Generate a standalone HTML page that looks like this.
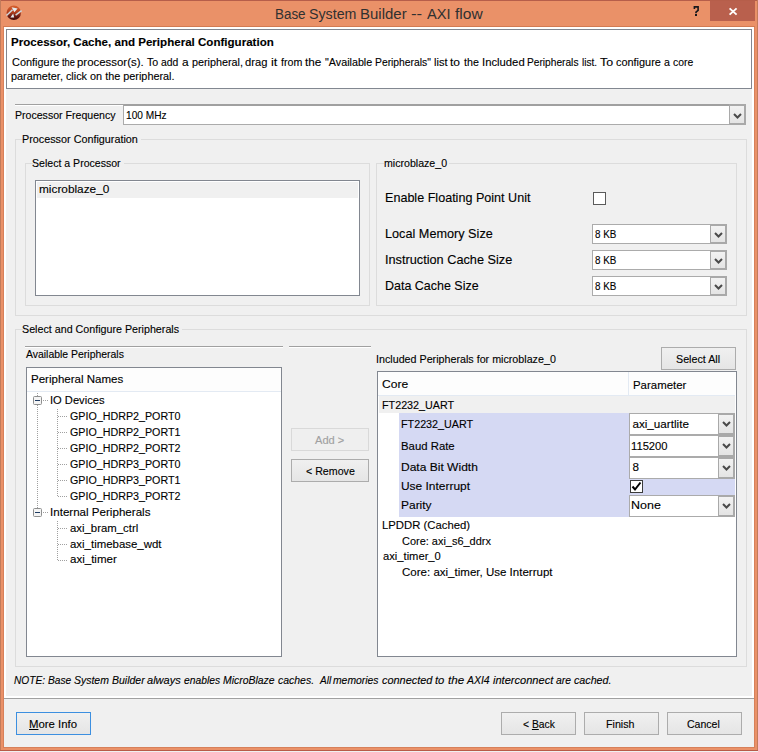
<!DOCTYPE html><html><head><meta charset="utf-8"><style>
html,body{margin:0;padding:0;width:758px;height:752px;overflow:hidden;background:#F0F0F0;}
.b{position:absolute;}
.t{position:absolute;transform-origin:0 0;white-space:nowrap;font-family:"Liberation Sans",sans-serif;color:#000;line-height:16px;height:16px;-webkit-text-stroke-width:0.12px;}
</style></head><body>
<div class="b" style="left:0px;top:0px;width:758px;height:752px;background:#EA9168;"></div>
<div class="b" style="left:0px;top:0px;width:758px;height:1px;background:#B65E4A;"></div>
<div class="b" style="left:0px;top:0px;width:1px;height:752px;background:#C27B5B;"></div>
<div class="b" style="left:757px;top:0px;width:1px;height:752px;background:#C27B5B;"></div>
<div class="b" style="left:3px;top:26px;width:1px;height:722px;background:#D7805A;"></div>
<div class="b" style="left:754px;top:26px;width:1px;height:722px;background:#D7805A;"></div>
<div class="b" style="left:3px;top:26px;width:752px;height:1px;background:#D27A52;"></div>
<div class="b" style="left:3px;top:747px;width:752px;height:1px;background:#D7805A;"></div>
<div class="b" style="left:0px;top:750px;width:758px;height:1px;background:#B85A48;"></div>
<div class="b" style="left:0px;top:751px;width:758px;height:1px;background:#F0F0F0;"></div>
<div class="b" style="left:710px;top:1px;width:45px;height:20px;background:#B9604D;"></div>
<div class="b" style="left:4px;top:27px;width:750px;height:720px;background:#F0F0F0;"></div>
<div class="b" style="left:4px;top:27px;width:2px;height:671px;background:#FFFFFF;"></div>
<div class="b" style="left:752px;top:27px;width:2px;height:671px;background:#FFFFFF;"></div>
<div class="b" style="left:4px;top:696px;width:750px;height:2px;background:#FFFFFF;"></div>
<div class="b" style="left:4px;top:698px;width:750px;height:1px;background:#A0A0A0;"></div>
<div class="b" style="left:4px;top:27px;width:750px;height:62px;background:#FFFFFF;"></div>
<div class="b" style="left:6px;top:29px;width:746px;height:60px;border:1px solid #828790;box-sizing:border-box;background:#fff;"></div>
<div class="b" style="left:15px;top:104px;width:108px;height:1px;background:#A0A0A0;"></div>
<div class="b" style="left:15px;top:105px;width:108px;height:1px;background:#FFFFFF;"></div>
<div class="b" style="left:123px;top:104px;width:623px;height:21px;background:#fff;border:1px solid #ABABAB;border-top:2px solid #A0A0A0;box-sizing:border-box;"></div>
<div class="b" style="left:729px;top:104px;width:17px;height:21px;background:linear-gradient(#F2F2F2,#E4E4E4);border:2px solid #A9A9A9;border-left-width:1.5px;box-sizing:border-box;"></div>
<div class="b" style="left:15px;top:139px;width:732px;height:177px;border:1px solid #DCDCDC;box-sizing:border-box;"></div>
<div class="b" style="left:23px;top:132px;width:118px;height:14px;background:#F0F0F0;"></div>
<div class="b" style="left:25px;top:163px;width:345px;height:143px;border:1px solid #DCDCDC;box-sizing:border-box;"></div>
<div class="b" style="left:33px;top:156px;width:91px;height:14px;background:#F0F0F0;"></div>
<div class="b" style="left:35px;top:180px;width:325px;height:116px;background:#fff;border:1px solid #828790;box-sizing:border-box;"></div>
<div class="b" style="left:37px;top:182px;width:321px;height:16px;background:#F0F0F0;"></div>
<div class="b" style="left:376px;top:163px;width:361px;height:143px;border:1px solid #DCDCDC;box-sizing:border-box;"></div>
<div class="b" style="left:384px;top:156px;width:65px;height:14px;background:#F0F0F0;"></div>
<div class="b" style="left:593px;top:192px;width:13px;height:13px;background:#fff;border:1px solid #5A5A5A;box-sizing:border-box;"></div>
<div class="b" style="left:592px;top:224px;width:135px;height:20px;background:#fff;border:1px solid #ABABAB;box-sizing:border-box;"></div>
<div class="b" style="left:710px;top:224px;width:17px;height:20px;background:linear-gradient(#F2F2F2,#E4E4E4);border:2px solid #A9A9A9;border-left-width:1.5px;box-sizing:border-box;"></div>
<div class="b" style="left:592px;top:250px;width:135px;height:20px;background:#fff;border:1px solid #ABABAB;box-sizing:border-box;"></div>
<div class="b" style="left:710px;top:250px;width:17px;height:20px;background:linear-gradient(#F2F2F2,#E4E4E4);border:2px solid #A9A9A9;border-left-width:1.5px;box-sizing:border-box;"></div>
<div class="b" style="left:592px;top:276px;width:135px;height:20px;background:#fff;border:1px solid #ABABAB;box-sizing:border-box;"></div>
<div class="b" style="left:710px;top:276px;width:17px;height:20px;background:linear-gradient(#F2F2F2,#E4E4E4);border:2px solid #A9A9A9;border-left-width:1.5px;box-sizing:border-box;"></div>
<div class="b" style="left:15px;top:329px;width:732px;height:338px;border:1px solid #DCDCDC;box-sizing:border-box;"></div>
<div class="b" style="left:23px;top:322px;width:159px;height:14px;background:#F0F0F0;"></div>
<div class="b" style="left:25px;top:346px;width:258px;height:1px;background:#A0A0A0;"></div>
<div class="b" style="left:25px;top:347px;width:258px;height:1px;background:#FFFFFF;"></div>
<div class="b" style="left:289px;top:346px;width:82px;height:1px;background:#A0A0A0;"></div>
<div class="b" style="left:289px;top:347px;width:82px;height:1px;background:#FFFFFF;"></div>
<div class="b" style="left:26px;top:367px;width:256px;height:290px;background:#fff;border:1px solid #828790;box-sizing:border-box;"></div>
<div class="b" style="left:27px;top:368px;width:254px;height:23px;background:#FDFDFD;"></div>
<div class="b" style="left:27px;top:391px;width:254px;height:1px;background:#E3EAF3;"></div>
<div class="b" style="left:291px;top:428px;width:78px;height:23px;background:#EFEFEF;border:1px solid #D9D9D9;box-sizing:border-box;"></div>
<div class="b" style="left:291px;top:459px;width:78px;height:23px;background:linear-gradient(#F0F0F0,#E5E5E5);border:1px solid #ACACAC;box-sizing:border-box;"></div>
<div class="b" style="left:661px;top:347px;width:75px;height:23px;background:linear-gradient(#F0F0F0,#E5E5E5);border:1px solid #ACACAC;box-sizing:border-box;"></div>
<div class="b" style="left:16px;top:712px;width:75px;height:23px;background:linear-gradient(#F0F0F0,#E5E5E5);border:1px solid #3C8FE0;box-sizing:border-box;"></div>
<div class="b" style="left:501px;top:712px;width:75px;height:23px;background:linear-gradient(#F0F0F0,#E5E5E5);border:1px solid #ACACAC;box-sizing:border-box;"></div>
<div class="b" style="left:584px;top:712px;width:75px;height:23px;background:linear-gradient(#F0F0F0,#E5E5E5);border:1px solid #ACACAC;box-sizing:border-box;"></div>
<div class="b" style="left:667px;top:712px;width:75px;height:23px;background:linear-gradient(#F0F0F0,#E5E5E5);border:1px solid #ACACAC;box-sizing:border-box;"></div>
<div class="b" style="left:377px;top:371px;width:360px;height:286px;background:#fff;border:1px solid #828790;box-sizing:border-box;"></div>
<div class="b" style="left:378px;top:372px;width:357px;height:24px;background:#FDFDFD;"></div>
<div class="b" style="left:378px;top:395px;width:357px;height:1px;background:#E3EAF3;"></div>
<div class="b" style="left:628px;top:372px;width:1px;height:23px;background:#E3EAF3;"></div>
<div class="b" style="left:379px;top:396px;width:356px;height:17px;background:#F0F0F0;"></div>
<div class="b" style="left:399px;top:413px;width:336px;height:104px;background:#D5D9F3;"></div>
<div class="b" style="left:629px;top:413px;width:106px;height:22px;background:#fff;border:1px solid #ABABAB;box-sizing:border-box;"></div>
<div class="b" style="left:718px;top:413px;width:17px;height:22px;background:linear-gradient(#F2F2F2,#E4E4E4);border:2px solid #A9A9A9;border-left-width:1.5px;box-sizing:border-box;"></div>
<div class="b" style="left:629px;top:435px;width:106px;height:22px;background:#fff;border:1px solid #ABABAB;box-sizing:border-box;"></div>
<div class="b" style="left:718px;top:435px;width:17px;height:22px;background:linear-gradient(#F2F2F2,#E4E4E4);border:2px solid #A9A9A9;border-left-width:1.5px;box-sizing:border-box;"></div>
<div class="b" style="left:629px;top:457px;width:106px;height:22px;background:#fff;border:1px solid #ABABAB;box-sizing:border-box;"></div>
<div class="b" style="left:718px;top:457px;width:17px;height:22px;background:linear-gradient(#F2F2F2,#E4E4E4);border:2px solid #A9A9A9;border-left-width:1.5px;box-sizing:border-box;"></div>
<div class="b" style="left:629px;top:495px;width:106px;height:22px;background:#fff;border:1px solid #ABABAB;box-sizing:border-box;"></div>
<div class="b" style="left:718px;top:495px;width:17px;height:22px;background:linear-gradient(#F2F2F2,#E4E4E4);border:2px solid #A9A9A9;border-left-width:1.5px;box-sizing:border-box;"></div>
<div class="b" style="left:630px;top:480px;width:13px;height:13px;background:#fff;border:1px solid #3B3B3B;box-sizing:border-box;"></div>
<svg class="b" style="left:0;top:0" width="758" height="752"><polyline points="734.0,114.0 737.5,117.5 741.0,114.0" fill="none" stroke="#4A4A4A" stroke-width="2"/><polyline points="715.0,233.0 718.5,236.5 722.0,233.0" fill="none" stroke="#4A4A4A" stroke-width="2"/><polyline points="715.0,259.0 718.5,262.5 722.0,259.0" fill="none" stroke="#4A4A4A" stroke-width="2"/><polyline points="715.0,285.0 718.5,288.5 722.0,285.0" fill="none" stroke="#4A4A4A" stroke-width="2"/><polyline points="723.0,422.0 726.5,425.5 730.0,422.0" fill="none" stroke="#4A4A4A" stroke-width="2"/><polyline points="723.0,444.0 726.5,447.5 730.0,444.0" fill="none" stroke="#4A4A4A" stroke-width="2"/><polyline points="723.0,466.0 726.5,469.5 730.0,466.0" fill="none" stroke="#4A4A4A" stroke-width="2"/><polyline points="723.0,504.0 726.5,507.5 730.0,504.0" fill="none" stroke="#4A4A4A" stroke-width="2"/><polyline points="632.5,486.5 635,489.5 640.5,482.5" fill="none" stroke="#000" stroke-width="2"/><rect x="37" y="393" width="1" height="1" fill="#A0A0A0"/><rect x="37" y="395" width="1" height="1" fill="#A0A0A0"/><rect x="37" y="405" width="1" height="1" fill="#A0A0A0"/><rect x="37" y="407" width="1" height="1" fill="#A0A0A0"/><rect x="37" y="409" width="1" height="1" fill="#A0A0A0"/><rect x="37" y="411" width="1" height="1" fill="#A0A0A0"/><rect x="37" y="413" width="1" height="1" fill="#A0A0A0"/><rect x="37" y="415" width="1" height="1" fill="#A0A0A0"/><rect x="37" y="417" width="1" height="1" fill="#A0A0A0"/><rect x="37" y="419" width="1" height="1" fill="#A0A0A0"/><rect x="37" y="421" width="1" height="1" fill="#A0A0A0"/><rect x="37" y="423" width="1" height="1" fill="#A0A0A0"/><rect x="37" y="425" width="1" height="1" fill="#A0A0A0"/><rect x="37" y="427" width="1" height="1" fill="#A0A0A0"/><rect x="37" y="429" width="1" height="1" fill="#A0A0A0"/><rect x="37" y="431" width="1" height="1" fill="#A0A0A0"/><rect x="37" y="433" width="1" height="1" fill="#A0A0A0"/><rect x="37" y="435" width="1" height="1" fill="#A0A0A0"/><rect x="37" y="437" width="1" height="1" fill="#A0A0A0"/><rect x="37" y="439" width="1" height="1" fill="#A0A0A0"/><rect x="37" y="441" width="1" height="1" fill="#A0A0A0"/><rect x="37" y="443" width="1" height="1" fill="#A0A0A0"/><rect x="37" y="445" width="1" height="1" fill="#A0A0A0"/><rect x="37" y="447" width="1" height="1" fill="#A0A0A0"/><rect x="37" y="449" width="1" height="1" fill="#A0A0A0"/><rect x="37" y="451" width="1" height="1" fill="#A0A0A0"/><rect x="37" y="453" width="1" height="1" fill="#A0A0A0"/><rect x="37" y="455" width="1" height="1" fill="#A0A0A0"/><rect x="37" y="457" width="1" height="1" fill="#A0A0A0"/><rect x="37" y="459" width="1" height="1" fill="#A0A0A0"/><rect x="37" y="461" width="1" height="1" fill="#A0A0A0"/><rect x="37" y="463" width="1" height="1" fill="#A0A0A0"/><rect x="37" y="465" width="1" height="1" fill="#A0A0A0"/><rect x="37" y="467" width="1" height="1" fill="#A0A0A0"/><rect x="37" y="469" width="1" height="1" fill="#A0A0A0"/><rect x="37" y="471" width="1" height="1" fill="#A0A0A0"/><rect x="37" y="473" width="1" height="1" fill="#A0A0A0"/><rect x="37" y="475" width="1" height="1" fill="#A0A0A0"/><rect x="37" y="477" width="1" height="1" fill="#A0A0A0"/><rect x="37" y="479" width="1" height="1" fill="#A0A0A0"/><rect x="37" y="481" width="1" height="1" fill="#A0A0A0"/><rect x="37" y="483" width="1" height="1" fill="#A0A0A0"/><rect x="37" y="485" width="1" height="1" fill="#A0A0A0"/><rect x="37" y="487" width="1" height="1" fill="#A0A0A0"/><rect x="37" y="489" width="1" height="1" fill="#A0A0A0"/><rect x="37" y="491" width="1" height="1" fill="#A0A0A0"/><rect x="37" y="493" width="1" height="1" fill="#A0A0A0"/><rect x="37" y="495" width="1" height="1" fill="#A0A0A0"/><rect x="37" y="497" width="1" height="1" fill="#A0A0A0"/><rect x="37" y="499" width="1" height="1" fill="#A0A0A0"/><rect x="37" y="501" width="1" height="1" fill="#A0A0A0"/><rect x="37" y="503" width="1" height="1" fill="#A0A0A0"/><rect x="37" y="505" width="1" height="1" fill="#A0A0A0"/><rect x="37" y="507" width="1" height="1" fill="#A0A0A0"/><rect x="37" y="509" width="1" height="1" fill="#A0A0A0"/><rect x="37" y="511" width="1" height="1" fill="#A0A0A0"/><rect x="43" y="400" width="1" height="1" fill="#A0A0A0"/><rect x="45" y="400" width="1" height="1" fill="#A0A0A0"/><rect x="47" y="400" width="1" height="1" fill="#A0A0A0"/><rect x="57" y="409" width="1" height="1" fill="#A0A0A0"/><rect x="57" y="411" width="1" height="1" fill="#A0A0A0"/><rect x="57" y="413" width="1" height="1" fill="#A0A0A0"/><rect x="57" y="415" width="1" height="1" fill="#A0A0A0"/><rect x="57" y="417" width="1" height="1" fill="#A0A0A0"/><rect x="57" y="419" width="1" height="1" fill="#A0A0A0"/><rect x="57" y="421" width="1" height="1" fill="#A0A0A0"/><rect x="57" y="423" width="1" height="1" fill="#A0A0A0"/><rect x="57" y="425" width="1" height="1" fill="#A0A0A0"/><rect x="57" y="427" width="1" height="1" fill="#A0A0A0"/><rect x="57" y="429" width="1" height="1" fill="#A0A0A0"/><rect x="57" y="431" width="1" height="1" fill="#A0A0A0"/><rect x="57" y="433" width="1" height="1" fill="#A0A0A0"/><rect x="57" y="435" width="1" height="1" fill="#A0A0A0"/><rect x="57" y="437" width="1" height="1" fill="#A0A0A0"/><rect x="57" y="439" width="1" height="1" fill="#A0A0A0"/><rect x="57" y="441" width="1" height="1" fill="#A0A0A0"/><rect x="57" y="443" width="1" height="1" fill="#A0A0A0"/><rect x="57" y="445" width="1" height="1" fill="#A0A0A0"/><rect x="57" y="447" width="1" height="1" fill="#A0A0A0"/><rect x="57" y="449" width="1" height="1" fill="#A0A0A0"/><rect x="57" y="451" width="1" height="1" fill="#A0A0A0"/><rect x="57" y="453" width="1" height="1" fill="#A0A0A0"/><rect x="57" y="455" width="1" height="1" fill="#A0A0A0"/><rect x="57" y="457" width="1" height="1" fill="#A0A0A0"/><rect x="57" y="459" width="1" height="1" fill="#A0A0A0"/><rect x="57" y="461" width="1" height="1" fill="#A0A0A0"/><rect x="57" y="463" width="1" height="1" fill="#A0A0A0"/><rect x="57" y="465" width="1" height="1" fill="#A0A0A0"/><rect x="57" y="467" width="1" height="1" fill="#A0A0A0"/><rect x="57" y="469" width="1" height="1" fill="#A0A0A0"/><rect x="57" y="471" width="1" height="1" fill="#A0A0A0"/><rect x="57" y="473" width="1" height="1" fill="#A0A0A0"/><rect x="57" y="475" width="1" height="1" fill="#A0A0A0"/><rect x="57" y="477" width="1" height="1" fill="#A0A0A0"/><rect x="57" y="479" width="1" height="1" fill="#A0A0A0"/><rect x="57" y="481" width="1" height="1" fill="#A0A0A0"/><rect x="57" y="483" width="1" height="1" fill="#A0A0A0"/><rect x="57" y="485" width="1" height="1" fill="#A0A0A0"/><rect x="57" y="487" width="1" height="1" fill="#A0A0A0"/><rect x="57" y="489" width="1" height="1" fill="#A0A0A0"/><rect x="57" y="491" width="1" height="1" fill="#A0A0A0"/><rect x="57" y="493" width="1" height="1" fill="#A0A0A0"/><rect x="57" y="495" width="1" height="1" fill="#A0A0A0"/><rect x="58" y="416" width="1" height="1" fill="#A0A0A0"/><rect x="60" y="416" width="1" height="1" fill="#A0A0A0"/><rect x="62" y="416" width="1" height="1" fill="#A0A0A0"/><rect x="64" y="416" width="1" height="1" fill="#A0A0A0"/><rect x="66" y="416" width="1" height="1" fill="#A0A0A0"/><rect x="58" y="432" width="1" height="1" fill="#A0A0A0"/><rect x="60" y="432" width="1" height="1" fill="#A0A0A0"/><rect x="62" y="432" width="1" height="1" fill="#A0A0A0"/><rect x="64" y="432" width="1" height="1" fill="#A0A0A0"/><rect x="66" y="432" width="1" height="1" fill="#A0A0A0"/><rect x="58" y="448" width="1" height="1" fill="#A0A0A0"/><rect x="60" y="448" width="1" height="1" fill="#A0A0A0"/><rect x="62" y="448" width="1" height="1" fill="#A0A0A0"/><rect x="64" y="448" width="1" height="1" fill="#A0A0A0"/><rect x="66" y="448" width="1" height="1" fill="#A0A0A0"/><rect x="58" y="464" width="1" height="1" fill="#A0A0A0"/><rect x="60" y="464" width="1" height="1" fill="#A0A0A0"/><rect x="62" y="464" width="1" height="1" fill="#A0A0A0"/><rect x="64" y="464" width="1" height="1" fill="#A0A0A0"/><rect x="66" y="464" width="1" height="1" fill="#A0A0A0"/><rect x="58" y="480" width="1" height="1" fill="#A0A0A0"/><rect x="60" y="480" width="1" height="1" fill="#A0A0A0"/><rect x="62" y="480" width="1" height="1" fill="#A0A0A0"/><rect x="64" y="480" width="1" height="1" fill="#A0A0A0"/><rect x="66" y="480" width="1" height="1" fill="#A0A0A0"/><rect x="58" y="496" width="1" height="1" fill="#A0A0A0"/><rect x="60" y="496" width="1" height="1" fill="#A0A0A0"/><rect x="62" y="496" width="1" height="1" fill="#A0A0A0"/><rect x="64" y="496" width="1" height="1" fill="#A0A0A0"/><rect x="66" y="496" width="1" height="1" fill="#A0A0A0"/><rect x="43" y="512" width="1" height="1" fill="#A0A0A0"/><rect x="45" y="512" width="1" height="1" fill="#A0A0A0"/><rect x="47" y="512" width="1" height="1" fill="#A0A0A0"/><rect x="57" y="521" width="1" height="1" fill="#A0A0A0"/><rect x="57" y="523" width="1" height="1" fill="#A0A0A0"/><rect x="57" y="525" width="1" height="1" fill="#A0A0A0"/><rect x="57" y="527" width="1" height="1" fill="#A0A0A0"/><rect x="57" y="529" width="1" height="1" fill="#A0A0A0"/><rect x="57" y="531" width="1" height="1" fill="#A0A0A0"/><rect x="57" y="533" width="1" height="1" fill="#A0A0A0"/><rect x="57" y="535" width="1" height="1" fill="#A0A0A0"/><rect x="57" y="537" width="1" height="1" fill="#A0A0A0"/><rect x="57" y="539" width="1" height="1" fill="#A0A0A0"/><rect x="57" y="541" width="1" height="1" fill="#A0A0A0"/><rect x="57" y="543" width="1" height="1" fill="#A0A0A0"/><rect x="57" y="545" width="1" height="1" fill="#A0A0A0"/><rect x="57" y="547" width="1" height="1" fill="#A0A0A0"/><rect x="57" y="549" width="1" height="1" fill="#A0A0A0"/><rect x="57" y="551" width="1" height="1" fill="#A0A0A0"/><rect x="57" y="553" width="1" height="1" fill="#A0A0A0"/><rect x="57" y="555" width="1" height="1" fill="#A0A0A0"/><rect x="57" y="557" width="1" height="1" fill="#A0A0A0"/><rect x="57" y="559" width="1" height="1" fill="#A0A0A0"/><rect x="58" y="528" width="1" height="1" fill="#A0A0A0"/><rect x="60" y="528" width="1" height="1" fill="#A0A0A0"/><rect x="62" y="528" width="1" height="1" fill="#A0A0A0"/><rect x="64" y="528" width="1" height="1" fill="#A0A0A0"/><rect x="66" y="528" width="1" height="1" fill="#A0A0A0"/><rect x="58" y="544" width="1" height="1" fill="#A0A0A0"/><rect x="60" y="544" width="1" height="1" fill="#A0A0A0"/><rect x="62" y="544" width="1" height="1" fill="#A0A0A0"/><rect x="64" y="544" width="1" height="1" fill="#A0A0A0"/><rect x="66" y="544" width="1" height="1" fill="#A0A0A0"/><rect x="58" y="560" width="1" height="1" fill="#A0A0A0"/><rect x="60" y="560" width="1" height="1" fill="#A0A0A0"/><rect x="62" y="560" width="1" height="1" fill="#A0A0A0"/><rect x="64" y="560" width="1" height="1" fill="#A0A0A0"/><rect x="66" y="560" width="1" height="1" fill="#A0A0A0"/><rect x="33.5" y="396.5" width="8" height="8" fill="#F4F4F4" stroke="#8E8F8F" stroke-width="1" rx="1"/><rect x="35" y="400" width="5" height="1" fill="#1F3C62"/><rect x="33.5" y="508.5" width="8" height="8" fill="#F4F4F4" stroke="#8E8F8F" stroke-width="1" rx="1"/><rect x="35" y="512" width="5" height="1" fill="#1F3C62"/><defs><linearGradient id="ig" x1="0" y1="0" x2="0" y2="1"><stop offset="0" stop-color="#D8602E"/><stop offset="0.45" stop-color="#B4401E"/><stop offset="0.75" stop-color="#6A1A12"/><stop offset="1" stop-color="#3A0A08"/></linearGradient></defs><circle cx="13.8" cy="12.8" r="7.2" fill="url(#ig)"/><path d="M6.5 15.5 L12.5 9.8 M15.6 15.2 L21.6 10.6" stroke="#CDD6DC" stroke-width="1.5" fill="none"/><polygon points="11.6,7.2 17.6,8.4 14.4,12.2" fill="#E4EAEE"/><polygon points="10.4,17.6 14.2,17.6 13.2,13.6" fill="#E4EAEE"/><polyline points="694.4,9 694.4,6.9 698.1,6.9 698.1,10.3 696,12.2 696,13.2" fill="none" stroke="#18181C" stroke-width="1.6"/><rect x="695" y="14" width="2" height="2" fill="#18181C"/><path d="M729.6 8.4 L736.6 14.6 M736.6 8.4 L729.6 14.6" stroke="#FFFFFF" stroke-width="1.9"/></svg>
<div class="t" style="left:11.51px;top:54.19px;font-size:11px;transform:scaleX(0.993);">Configure</div>
<div class="t" style="left:62.01px;top:54.19px;font-size:11px;transform:scaleX(0.844);">the</div>
<div class="t" style="left:77.37px;top:54.19px;font-size:11px;transform:scaleX(1.038);">processor(s).</div>
<div class="t" style="left:147.22px;top:54.19px;font-size:11px;transform:scaleX(0.967);">To</div>
<div class="t" style="left:161.44px;top:54.19px;font-size:11px;transform:scaleX(0.943);">add</div>
<div class="t" style="left:181.55px;top:54.19px;font-size:11px;transform:scaleX(1.078);">a</div>
<div class="t" style="left:191.51px;top:54.19px;font-size:11px;transform:scaleX(0.981);">peripheral,</div>
<div class="t" style="left:245.49px;top:54.19px;font-size:11px;transform:scaleX(1.017);">drag</div>
<div class="t" style="left:270.89px;top:54.19px;font-size:11px;transform:scaleX(1.156);">it</div>
<div class="t" style="left:280.92px;top:54.19px;font-size:11px;transform:scaleX(0.970);">from</div>
<div class="t" style="left:305.15px;top:54.19px;font-size:11px;transform:scaleX(1.068);">the</div>
<div class="t" style="left:324.82px;top:54.19px;font-size:11px;transform:scaleX(0.977);">"Available</div>
<div class="t" style="left:375.04px;top:54.19px;font-size:11px;transform:scaleX(0.939);">Peripherals"</div>
<div class="t" style="left:433.80px;top:54.19px;font-size:11px;transform:scaleX(1.006);">list</div>
<div class="t" style="left:450.33px;top:54.19px;font-size:11px;transform:scaleX(1.095);">to</div>
<div class="t" style="left:463.82px;top:54.19px;font-size:11px;transform:scaleX(0.970);">the</div>
<div class="t" style="left:481.58px;top:54.19px;font-size:11px;transform:scaleX(1.026);">Included</div>
<div class="t" style="left:527.45px;top:54.19px;font-size:11px;transform:scaleX(0.925);">Peripherals</div>
<div class="t" style="left:581.76px;top:54.19px;font-size:11px;transform:scaleX(0.915);">list.</div>
<div class="t" style="left:599.51px;top:54.19px;font-size:11px;transform:scaleX(1.130);">To</div>
<div class="t" style="left:616.21px;top:54.19px;font-size:11px;transform:scaleX(0.991);">configure</div>
<div class="t" style="left:664.12px;top:54.19px;font-size:11px;transform:scaleX(0.969);">a</div>
<div class="t" style="left:673.04px;top:54.19px;font-size:11px;transform:scaleX(0.944);">core</div>
<div class="t" style="left:14.10px;top:671.79px;font-size:11px;transform:scaleX(0.923);font-style:italic;">NOTE:</div>
<div class="t" style="left:47.95px;top:671.79px;font-size:11px;transform:scaleX(0.927);font-style:italic;">Base</div>
<div class="t" style="left:74.03px;top:671.79px;font-size:11px;transform:scaleX(0.951);font-style:italic;">System</div>
<div class="t" style="left:111.83px;top:671.79px;font-size:11px;transform:scaleX(0.955);font-style:italic;">Builder</div>
<div class="t" style="left:147.40px;top:671.79px;font-size:11px;transform:scaleX(1.003);font-style:italic;">always</div>
<div class="t" style="left:184.25px;top:671.79px;font-size:11px;transform:scaleX(0.935);font-style:italic;">enables</div>
<div class="t" style="left:223.14px;top:671.79px;font-size:11px;transform:scaleX(0.948);font-style:italic;">MicroBlaze</div>
<div class="t" style="left:277.63px;top:671.79px;font-size:11px;transform:scaleX(0.952);font-style:italic;">caches.</div>
<div class="t" style="left:319.56px;top:671.79px;font-size:11px;transform:scaleX(0.910);font-style:italic;">All</div>
<div class="t" style="left:333.44px;top:671.79px;font-size:11px;transform:scaleX(0.941);font-style:italic;">memories</div>
<div class="t" style="left:381.71px;top:671.79px;font-size:11px;transform:scaleX(0.992);font-style:italic;">connected</div>
<div class="t" style="left:435.08px;top:671.79px;font-size:11px;transform:scaleX(1.022);font-style:italic;">to</div>
<div class="t" style="left:447.56px;top:671.79px;font-size:11px;transform:scaleX(1.057);font-style:italic;">the</div>
<div class="t" style="left:467.03px;top:671.79px;font-size:11px;transform:scaleX(0.951);font-style:italic;">AXI4</div>
<div class="t" style="left:492.60px;top:671.79px;font-size:11px;transform:scaleX(1.005);font-style:italic;">interconnect</div>
<div class="t" style="left:555.94px;top:671.79px;font-size:11px;transform:scaleX(0.938);font-style:italic;">are</div>
<div class="t" style="left:573.72px;top:671.79px;font-size:11px;transform:scaleX(0.973);font-style:italic;">cached.</div>
<div class="t" style="left:274.63px;top:5.65px;font-size:14px;transform:scaleX(0.958);-webkit-text-stroke-width:0;color:#303030;">Base</div>
<div class="t" style="left:308.89px;top:5.65px;font-size:14px;transform:scaleX(1.016);-webkit-text-stroke-width:0;color:#303030;">System</div>
<div class="t" style="left:360.25px;top:5.65px;font-size:14px;transform:scaleX(1.070);-webkit-text-stroke-width:0;color:#303030;">Builder</div>
<div class="t" style="left:410.96px;top:5.65px;font-size:14px;transform:scaleX(1.195);-webkit-text-stroke-width:0;color:#303030;">--</div>
<div class="t" style="left:426.87px;top:5.65px;font-size:14px;transform:scaleX(1.047);-webkit-text-stroke-width:0;color:#303030;">AXI</div>
<div class="t" style="left:454.52px;top:5.65px;font-size:14px;transform:scaleX(1.112);-webkit-text-stroke-width:0;color:#303030;">flow</div>
<div class="t" style="left:11.15px;top:34.19px;font-size:11px;transform:scaleX(1.051);font-weight:bold;">Processor, Cache, and Peripheral Configuration</div>
<div class="t" style="left:10.91px;top:67.69px;font-size:11px;transform:scaleX(0.987);">parameter, click on the peripheral.</div>
<div class="t" style="left:14.84px;top:107.19px;font-size:11px;transform:scaleX(0.961);">Processor Frequency</div>
<div class="t" style="left:125.98px;top:107.19px;font-size:11px;transform:scaleX(0.921);">100 MHz</div>
<div class="t" style="left:22.32px;top:131.19px;font-size:11px;transform:scaleX(0.982);">Processor Configuration</div>
<div class="t" style="left:32.44px;top:155.19px;font-size:11px;transform:scaleX(0.960);">Select a Processor</div>
<div class="t" style="left:39.29px;top:180.95px;font-size:11.7px;transform:scaleX(1.012);">microblaze_0</div>
<div class="t" style="left:383.54px;top:155.19px;font-size:11px;transform:scaleX(0.964);">microblaze_0</div>
<div class="t" style="left:385.27px;top:190.37px;font-size:12.2px;transform:scaleX(1.032);">Enable Floating Point Unit</div>
<div class="t" style="left:385.26px;top:226.27px;font-size:12.2px;transform:scaleX(1.040);">Local Memory Size</div>
<div class="t" style="left:385.26px;top:252.27px;font-size:12.2px;transform:scaleX(1.044);">Instruction Cache Size</div>
<div class="t" style="left:385.28px;top:278.27px;font-size:12.2px;transform:scaleX(1.024);">Data Cache Size</div>
<div class="t" style="left:594.70px;top:225.79px;font-size:11px;transform:scaleX(0.896);">8 KB</div>
<div class="t" style="left:594.70px;top:251.79px;font-size:11px;transform:scaleX(0.896);">8 KB</div>
<div class="t" style="left:594.70px;top:277.79px;font-size:11px;transform:scaleX(0.896);">8 KB</div>
<div class="t" style="left:22.23px;top:321.19px;font-size:11px;transform:scaleX(0.973);">Select and Configure Peripherals</div>
<div class="t" style="left:26.10px;top:345.69px;font-size:11px;transform:scaleX(0.949);">Available Peripherals</div>
<div class="t" style="left:30.81px;top:371.15px;font-size:11.7px;transform:scaleX(0.986);">Peripheral Names</div>
<div class="t" style="left:49.95px;top:391.95px;font-size:11.7px;transform:scaleX(0.954);">IO Devices</div>
<div class="t" style="left:69.98px;top:407.75px;font-size:11.7px;transform:scaleX(0.916);">GPIO_HDRP2_PORT0</div>
<div class="t" style="left:69.98px;top:423.75px;font-size:11.7px;transform:scaleX(0.916);">GPIO_HDRP2_PORT1</div>
<div class="t" style="left:69.98px;top:439.75px;font-size:11.7px;transform:scaleX(0.916);">GPIO_HDRP2_PORT2</div>
<div class="t" style="left:69.98px;top:455.75px;font-size:11.7px;transform:scaleX(0.916);">GPIO_HDRP3_PORT0</div>
<div class="t" style="left:69.98px;top:471.75px;font-size:11.7px;transform:scaleX(0.916);">GPIO_HDRP3_PORT1</div>
<div class="t" style="left:69.98px;top:487.75px;font-size:11.7px;transform:scaleX(0.916);">GPIO_HDRP3_PORT2</div>
<div class="t" style="left:49.51px;top:503.75px;font-size:11.7px;transform:scaleX(0.991);">Internal Peripherals</div>
<div class="t" style="left:70.30px;top:519.85px;font-size:11.7px;transform:scaleX(0.973);">axi_bram_ctrl</div>
<div class="t" style="left:70.30px;top:535.65px;font-size:11.7px;transform:scaleX(0.978);">axi_timebase_wdt</div>
<div class="t" style="left:70.30px;top:551.45px;font-size:11.7px;transform:scaleX(0.987);">axi_timer</div>
<div class="t" style="left:315.00px;top:431.89px;font-size:11px;color:#A0A0A0;transform:scaleX(1.007);">Add &gt;</div>
<div class="t" style="left:305.70px;top:462.89px;font-size:11px;transform:scaleX(0.968);">&lt; Remove</div>
<div class="t" style="left:375.93px;top:350.99px;font-size:11px;transform:scaleX(0.974);">Included Peripherals for microblaze_0</div>
<div class="t" style="left:675.53px;top:350.99px;font-size:11px;transform:scaleX(0.973);">Select All</div>
<div class="t" style="left:382.47px;top:376.45px;font-size:11.7px;transform:scaleX(1.033);">Core</div>
<div class="t" style="left:632.72px;top:376.75px;font-size:11.7px;transform:scaleX(0.978);">Parameter</div>
<div class="t" style="left:381.58px;top:396.65px;font-size:11.7px;transform:scaleX(0.921);">FT2232_UART</div>
<div class="t" style="left:401.38px;top:415.55px;font-size:11.7px;transform:scaleX(0.921);">FT2232_UART</div>
<div class="t" style="left:401.33px;top:437.65px;font-size:11.7px;transform:scaleX(0.972);">Baud Rate</div>
<div class="t" style="left:401.27px;top:459.35px;font-size:11.7px;transform:scaleX(1.029);">Data Bit Width</div>
<div class="t" style="left:401.28px;top:478.15px;font-size:11.7px;transform:scaleX(1.021);">Use Interrupt</div>
<div class="t" style="left:401.28px;top:497.05px;font-size:11.7px;transform:scaleX(1.024);">Parity</div>
<div class="t" style="left:632.40px;top:416.05px;font-size:11.7px;">axi_uartlite</div>
<div class="t" style="left:631.44px;top:437.65px;font-size:11.7px;transform:scaleX(0.959);">115200</div>
<div class="t" style="left:632.40px;top:459.45px;font-size:11.7px;">8</div>
<div class="t" style="left:631.33px;top:497.45px;font-size:11.7px;transform:scaleX(1.067);">None</div>
<div class="t" style="left:381.63px;top:516.85px;font-size:11.7px;transform:scaleX(0.969);">LPDDR (Cached)</div>
<div class="t" style="left:402.16px;top:532.65px;font-size:11.7px;transform:scaleX(0.937);">Core: axi_s6_ddrx</div>
<div class="t" style="left:382.60px;top:548.45px;font-size:11.7px;transform:scaleX(0.957);">axi_timer_0</div>
<div class="t" style="left:401.61px;top:564.25px;font-size:11.7px;transform:scaleX(0.986);">Core: axi_timer, Use Interrupt</div>
<div class="t" style="left:29.20px;top:716.19px;font-size:11px;transform:scaleX(1.033);"><u>M</u>ore Info</div>
<div class="t" style="left:522.70px;top:715.89px;font-size:11px;transform:scaleX(0.938);">&lt; <u>B</u>ack</div>
<div class="t" style="left:606.23px;top:716.19px;font-size:11px;transform:scaleX(0.971);">Finish</div>
<div class="t" style="left:686.74px;top:715.79px;font-size:11px;transform:scaleX(0.958);">Cancel</div>
</body></html>
